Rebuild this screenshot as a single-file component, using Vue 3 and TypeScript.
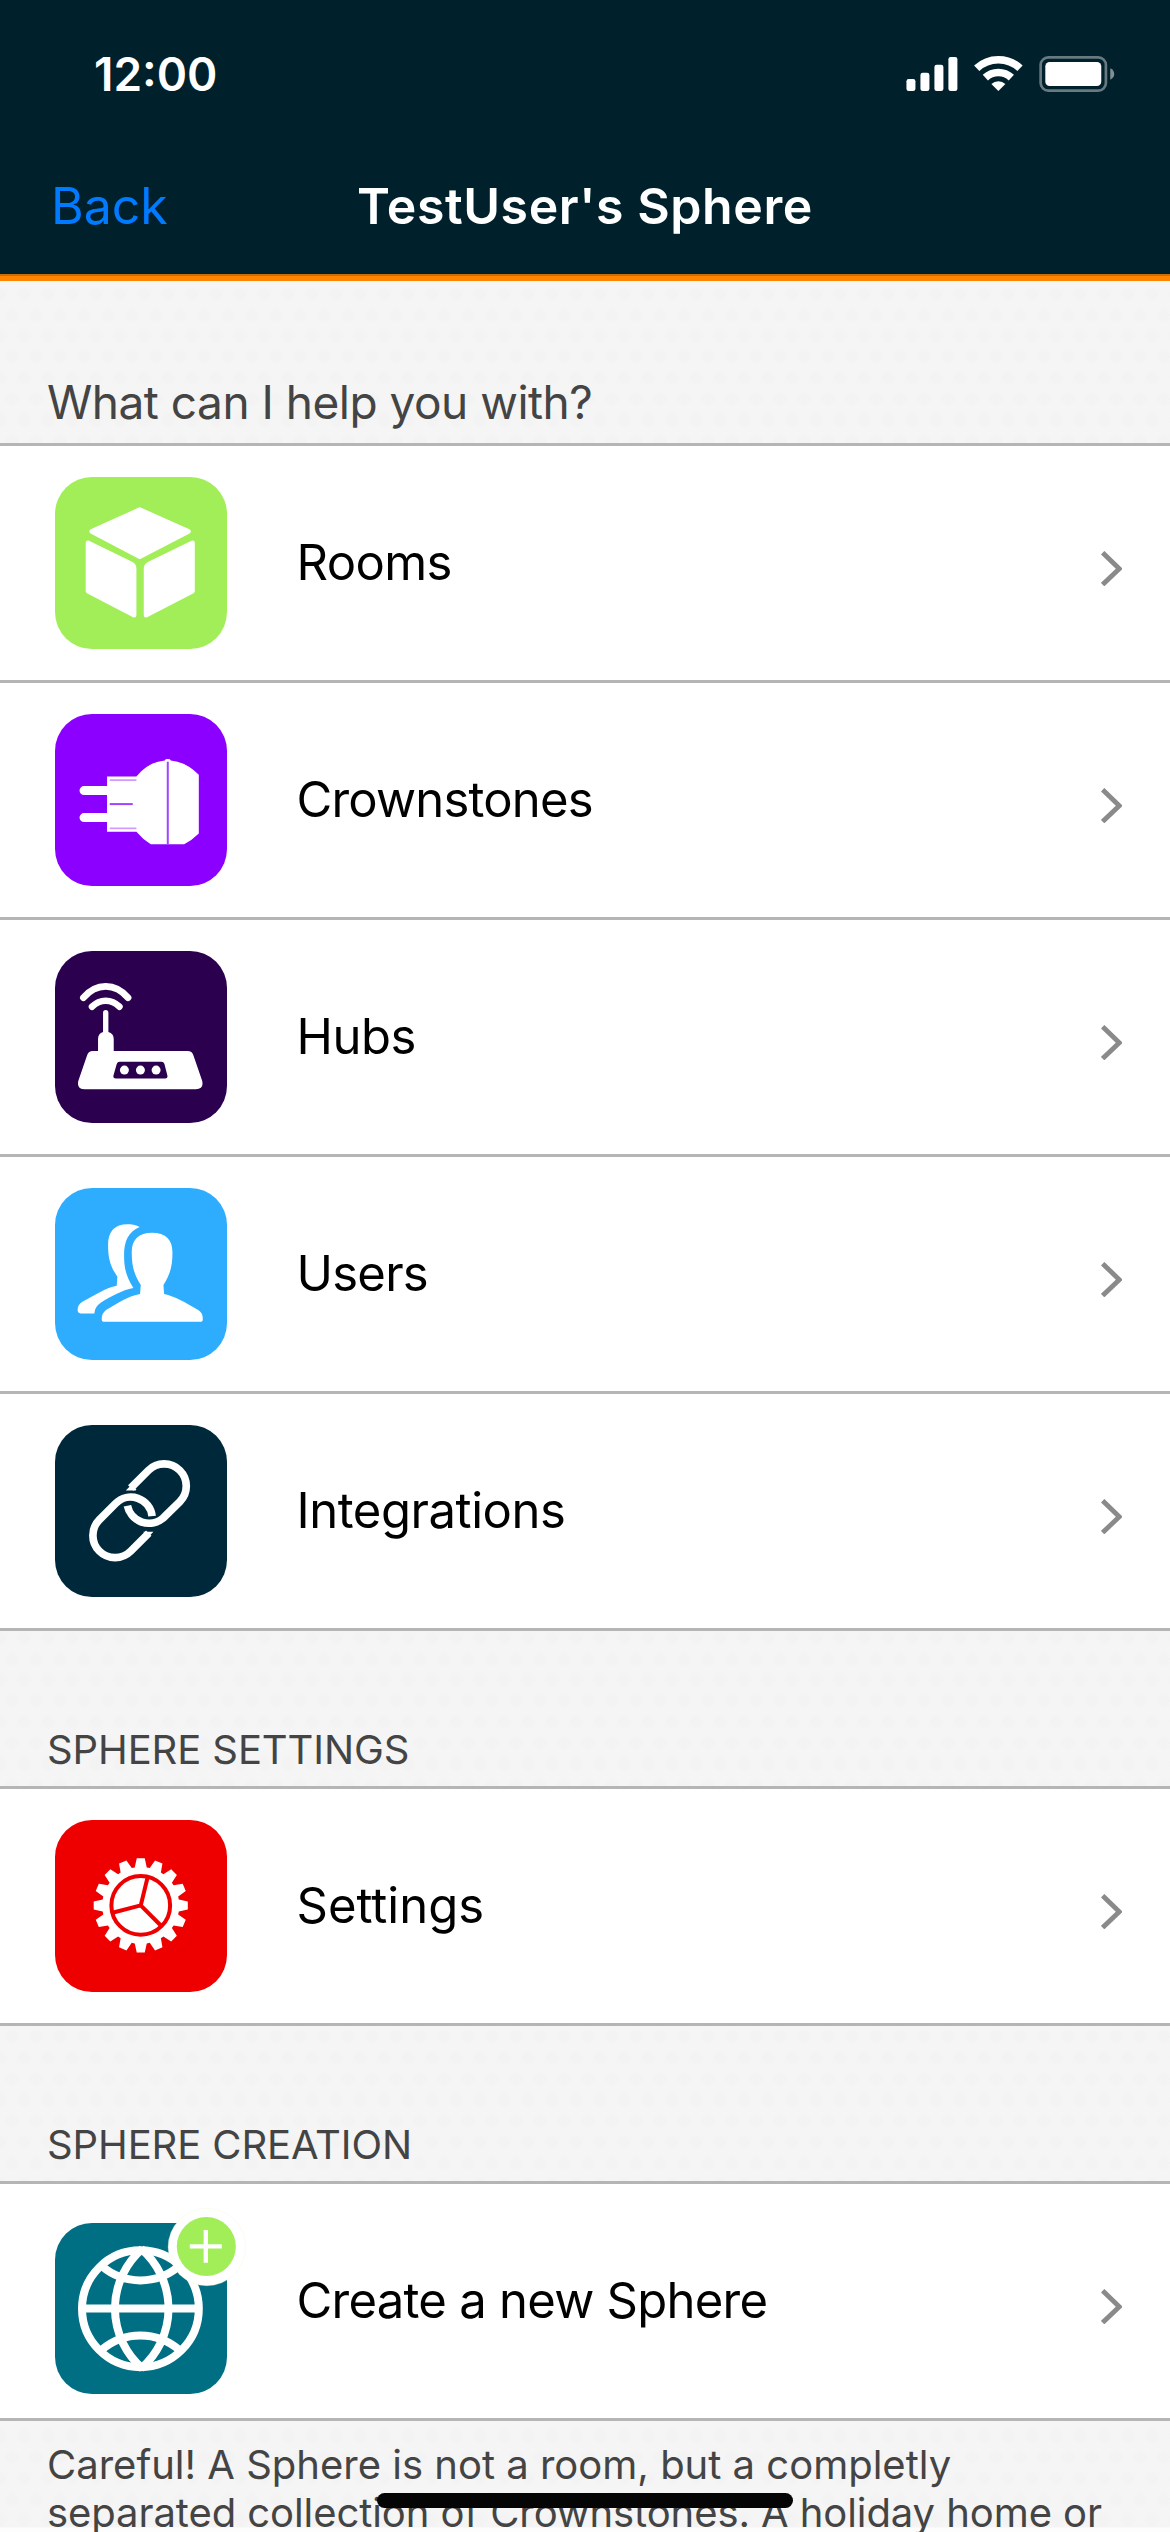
<script setup lang="ts">
type IconName = 'rooms' | 'plug' | 'hub' | 'users' | 'link' | 'gear' | 'globe'

interface MenuItem {
  label: string
  icon: IconName
  cls: string
  tracking: number
}

interface Section {
  title: string
  lead?: boolean
  items: MenuItem[]
}

const sections: Section[] = [
  {
    title: 'What can I help you with?',
    lead: true,
    items: [
      { label: 'Rooms', icon: 'rooms', cls: 'green', tracking: -0.65 },
      { label: 'Crownstones', icon: 'plug', cls: 'purple', tracking: -0.8 },
      { label: 'Hubs', icon: 'hub', cls: 'violet', tracking: -0.5 },
      { label: 'Users', icon: 'users', cls: 'blue', tracking: -0.75 },
      { label: 'Integrations', icon: 'link', cls: 'navy', tracking: -0.45 },
    ],
  },
  {
    title: 'SPHERE SETTINGS',
    items: [{ label: 'Settings', icon: 'gear', cls: 'red', tracking: 0 }],
  },
  {
    title: 'SPHERE CREATION',
    items: [{ label: 'Create a new Sphere', icon: 'globe', cls: 'teal', tracking: -0.74 }],
  },
]

const viewBoxes: Record<IconName, string> = {
  rooms: '46 51 514 514',
  plug: '46 42 514 514',
  hub: '46 48 514 514',
  users: '46 39 514 514',
  link: '46 44 514 514',
  gear: '46 44 514 514',
  globe: '46 69 514 514',
}

// Sixteen tapered teeth around the hub of the settings wheel
function gearPath(cx: number, cy: number): string {
  const points: string[] = []
  for (let i = 0; i < 16; i++) {
    const a = (i * Math.PI) / 8
    const corners: [number, number][] = [[-18, 114], [-12, 141], [12, 141], [18, 114]]
    for (const [t, r] of corners) {
      const x = cx + r * Math.sin(a) + t * Math.cos(a)
      const y = cy - r * Math.cos(a) + t * Math.sin(a)
      points.push(`${x.toFixed(1)},${y.toFixed(1)}`)
    }
  }
  return `M${points.join('L')}Z`
}
const gear = gearPath(303, 300)
</script>

<template>
  <div class="screen">
    <header class="top">
      <div class="status">
        <span class="time">12:00</span>
        <svg class="indicators" viewBox="80 75 626 112">
          <g fill="#fff">
            <rect x="81" y="147" width="27" height="36" rx="7" />
            <rect x="123" y="128" width="27" height="55" rx="7" />
            <rect x="165" y="104" width="27" height="79" rx="7" />
            <rect x="207" y="81" width="27" height="102" rx="7" />
            <path d="M357 183L336 162A31 31 0 0 1 378 162Z" />
            <rect x="498" y="96" width="168" height="72" rx="13" />
          </g>
          <g fill="none" stroke="#fff" stroke-width="23">
            <path d="M292 115A95 95 0 0 1 422 115" />
            <path d="M318 143A57 57 0 0 1 396 143" />
          </g>
          <rect x="484" y="82" width="196" height="100" rx="23" fill="none" stroke="#667a80" stroke-width="8" />
          <path d="M693 115Q705 121 705 132Q705 143 693 149Z" fill="#7f9095" />
        </svg>
      </div>
      <nav class="nav">
        <span class="back">Back</span>
        <h1 class="title">TestUser's Sphere</h1>
      </nav>
    </header>

    <section v-for="section in sections" :key="section.title">
      <h2 class="heading" :class="{ lead: section.lead }"><span>{{ section.title }}</span></h2>
      <ul class="list">
        <li v-for="item in section.items" :key="item.label" class="row">
          <div class="tile" :class="item.cls">
            <svg :viewBox="viewBoxes[item.icon]" fill="#fff">
              <template v-if="item.icon === 'rooms'">
                <g stroke="#fff" stroke-width="14" stroke-linejoin="round">
                  <path d="M300 149L446 214L300 290L156 214Z" />
                  <path d="M145 248L274 311Q283 316 283 325V465L145 393Z" />
                  <path d="M458 248L329 311Q319 316 319 325V465L458 393Z" />
                </g>
              </template>

              <template v-else-if="item.icon === 'plug'">
                <path d="M205 258H133A13.5 13.5 0 0 0 133 285H205ZM205 339H133A13.5 13.5 0 0 0 133 366H205Z" />
                <path d="M202 229H290Q326 185 375 181Q376 177 384 177Q392 177 393 181Q438 185 477 224V400Q456 421 433 432H333Q308 417 290 395H202Z" />
                <path d="M384 185V432" stroke="#a244ff" stroke-width="6" />
                <path d="M210 312H279" stroke="#a244ff" stroke-width="6" />
                <path d="M210 240H290M210 385H290" stroke="#cf9bff" stroke-width="5" />
              </template>

              <template v-else-if="item.icon === 'hub'">
                <path d="M160 348H175V312Q175 296 190 291V233A8 8 0 0 1 206 233V291Q222 296 222 312V348H443Q457 348 461 361L487 437Q493 462 468 462H136Q110 462 116 437L142 361Q146 348 160 348Z" />
                <g fill="none" stroke="#fff" stroke-width="20" stroke-linecap="round">
                  <path d="M131 188Q160 154 198 154Q236 154 265 188" />
                  <path d="M157 215Q175 197 198 197Q221 197 239 215" />
                </g>
                <path d="M240 380H365Q372 380 374 387L383 422Q384 430 376 430H228Q220 430 221 422L231 387Q233 380 240 380Z" fill="#2b004f" />
                <circle cx="254" cy="405" r="13.5" />
                <circle cx="302" cy="405" r="13.5" />
                <circle cx="349" cy="405" r="13.5" />
              </template>

              <template v-else-if="item.icon === 'users'">
                <path d="M337 173C377 173 398 193 398 232C398 275 390 300 371 330L373 357C406 364 435 382 474 404C486 411 489 420 489 432Q489 440 481 440H194Q186 440 186 432C186 420 190 411 200 404C235 384 267 363 301 357L303 330C284 300 276 275 276 232C276 193 297 173 337 173Z" />
                <path d="M300 156C286 149 275 148 263 148C225 148 205 170 205 210C205 255 214 277 233 305L231 332C200 337 166 360 128 380C116 388 113 396 114 408Q115 415 123 415H164C166 400 171 391 184 382C216 363 246 346 281 339C260 303 253 284 253 240C253 200 265 170 300 156Z" />
              </template>

              <template v-else-if="item.icon === 'link'">
                <g fill="none" stroke="#fff" stroke-width="23">
                  <path d="M273 233L326 180A66 66 0 0 1 420 274L370 323A66 66 0 0 1 263 286" />
                  <path d="M337 317A64 64 0 0 0 228 279L179 328A66 66 0 0 0 273 422L327 368" />
                </g>
                <path d="M258 240L270 228L290 236L288 240ZM311 364H341L329 377L315 372Z" />
              </template>

              <template v-else-if="item.icon === 'gear'">
                <path :d="gear" />
                <g fill="none" stroke="#ef0000" stroke-width="12">
                  <circle cx="303" cy="300" r="88" />
                  <path d="M303 300L323 218M303 300L218 322M303 300L364 361" />
                </g>
              </template>

              <template v-else>
                <g fill="none" stroke="#fff" stroke-width="24">
                  <circle cx="302" cy="326" r="175" />
                  <path d="M119 325H484" />
                  <path d="M308 146A237 237 0 0 0 308 505" />
                  <path d="M304 146A237 237 0 0 1 304 505" />
                  <path d="M186 198A178 178 0 0 0 418 198" />
                  <path d="M186 449A178 178 0 0 1 418 449" />
                </g>
                <circle cx="501" cy="141" r="116" stroke="#e6f9d2" stroke-width="1" />
                <circle cx="499.500" cy="139.500" r="88.500" fill="#a1ee59" />
                <path d="M498 90V188M450 139H546" stroke="#fff" stroke-width="13" />
              </template>
            </svg>
          </div>
          <span class="label" :style="{ letterSpacing: item.tracking + 'px' }">{{ item.label }}</span>
          <svg class="chevron" viewBox="93 152 64 106">
            <path d="M98 157L148 205L98 253" fill="none" stroke="#8a8a8a" stroke-width="14.500" />
          </svg>
        </li>
      </ul>
    </section>

    <p class="note">
      Careful! A Sphere is not a room, but a completly<br />
      <span class="second">separated collection of Crownstones. A holiday home or</span>
    </p>
    <div class="home-indicator"></div>
  </div>
</template>

<style>
body {
  margin: 0;
  overflow: hidden;
}
</style>

<style scoped>
.screen {
  position: relative;
  width: 1170px;
  height: 2532px;
  overflow: hidden;
  background-color: #f5f5f5;
  background-image:
    linear-gradient(to top, #fdfdfd 4px, transparent 5px),
    radial-gradient(circle, #f3f3f3 5px, transparent 8px),
    radial-gradient(circle, #f3f3f3 5px, transparent 8px);
  background-size: 100% 100%, 24px 42px, 24px 42px;
  background-position: 0 0, 0 0, 12px 21px;
  font-family: Inter, "Liberation Sans", sans-serif;
  color: #000;
}
.top {
  height: 281px;
  background: linear-gradient(#00212b 274px, #cc6f0a 274px, #cc6f0a 276px, #ff8500 276px);
  color: #fff;
}
.status {
  display: flex;
  justify-content: space-between;
  box-sizing: border-box;
  height: 141px;
  padding: 44px 55px 0 94px;
}
.time {
  font-size: 46px;
  line-height: 60px;
  font-weight: 600;
}
.indicators {
  width: 208.700px;
  height: 37.300px;
  margin-top: 11px;
}
.nav {
  display: grid;
  grid-template-columns: 260px 1fr 260px;
  align-items: center;
  height: 130px;
}
.back {
  padding-left: 51px;
  color: #007aff;
  font-size: 50px;
}
.title {
  margin: 0;
  text-align: center;
  font-size: 50px;
  font-weight: 600;
  letter-spacing: 0.600px;
  white-space: nowrap;
}
.heading {
  display: flex;
  align-items: flex-end;
  box-sizing: border-box;
  height: 155px;
  margin: 0;
  padding: 0 47px 12px;
  color: #444;
  font-size: 40px;
  line-height: 48px;
  font-weight: 400;
  letter-spacing: -0.100px;
}
.heading.lead {
  height: 162px;
  font-size: 46px;
  padding-bottom: 17px;
  letter-spacing: -0.500px;
}
.list {
  margin: 0;
  padding: 0;
  list-style: none;
  border-top: 3px solid #b5b5b5;
}
.row {
  display: flex;
  align-items: center;
  height: 234px;
  padding: 0 48px 0 55px;
  background: #fff;
  border-bottom: 3px solid #b5b5b5;
}
.tile {
  width: 171.500px;
  height: 171.500px;
  border-radius: 37px;
}
.tile svg {
  display: block;
  width: 100%;
  height: 100%;
  overflow: visible;
}
.green { background: #a1ee59; }
.purple { background: #8b00ff; }
.violet { background: #2b004f; }
.blue { background: #2eadff; }
.navy { background: #00283b; }
.red { background: #ef0000; }
.teal {
  background: #006f84;
  margin-top: 15px;
}
.label {
  flex: 1;
  margin-left: 70px;
  font-size: 49px;
  line-height: 60px;
}
.chevron {
  width: 21.300px;
  height: 35.300px;
  margin-top: 11px;
}
.note {
  margin: 0;
  padding: 20px 0 0 47px;
  color: #444;
  font-size: 40px;
  line-height: 48px;
  white-space: nowrap;
}
.second {
  letter-spacing: -0.080px;
}
.home-indicator {
  position: absolute;
  left: 377px;
  top: 2493px;
  width: 416px;
  height: 15px;
  border-radius: 8px;
  background: #050505;
}
</style>
